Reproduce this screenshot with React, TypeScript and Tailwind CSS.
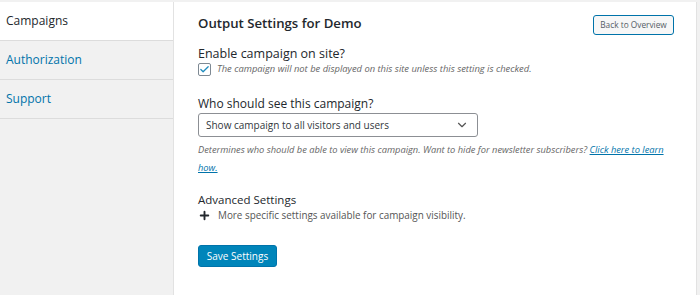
import { Check, ChevronDown, Plus } from "lucide-react";

const App = () => {
  return (
    <div className="w-[700px] h-[295px] bg-[#f1f1f1] pt-[2px] overflow-hidden font-['Open_Sans',sans-serif] text-[#23282d]">
      <div className="flex h-full">
        {/* Sidebar tabs */}
        <aside className="w-[174px] shrink-0 border-r border-[#e2e2e2] bg-[#f1f1f1]">
          <div className="h-[39px] bg-white border-b border-[#dcdcdc] flex items-center px-[6px] text-[12px] text-[#23282d]">
            Campaigns
          </div>
          <div className="h-[39px] border-b border-[#dcdcdc] flex items-center px-[6px] text-[12px] text-[#0073aa]">
            Authorization
          </div>
          <div className="h-[39px] border-b border-[#dcdcdc] flex items-center px-[6px] text-[12px] text-[#0073aa]">
            Support
          </div>
        </aside>

        {/* Main panel */}
        <main className="w-[523px] bg-white border-r border-[#e2e2e2] pl-[24px] pr-[22px]">
          <div className="flex items-start justify-between pt-[10px]">
            <h2 className="text-[13.2px] font-semibold leading-[20px] mt-[1px] text-[#23282d]">Output Settings for Demo</h2>
            <button className="mt-[3px] h-[20px] w-[81px] rounded-[3px] border border-[#0073aa] bg-[#f7f7f7] text-[8.3px] text-[#555d66] leading-none">
              Back to Overview
            </button>
          </div>

          <div className="mt-[10px]">
            <div className="text-[12.5px] leading-[18px]">Enable campaign on site?</div>
            <div className="flex items-center gap-[6px] h-[13px]">
              <span className="w-[13px] h-[13px] rounded-[2px] border border-[#7e8993] flex items-center justify-center">
                <Check size={13} strokeWidth={2.75} className="text-[#1e8cbe]" />
              </span>
              <span className="text-[9.4px] italic text-[#666]">
                The campaign will not be displayed on this site unless this setting is checked.
              </span>
            </div>
          </div>

          <div className="mt-[19px]">
            <div className="text-[12px] leading-[18px]">Who should see this campaign?</div>
            <div className="w-[280px] h-[24px] rounded-[3px] border border-[#8c8f94] flex items-center justify-between pl-[7px] pr-[8px] text-[10px] text-[#32373c]">
              <span>Show campaign to all visitors and users</span>
              <ChevronDown size={14} strokeWidth={2} className="text-[#555]" />
            </div>
            <p className="mt-[4px] text-[9.3px] italic text-[#666] leading-[18px] pr-[2px]">
              Determines who should be able to view this campaign. Want to hide for newsletter subscribers?{" "}
              <a className="text-[#0073aa] underline">Click here to learn how.</a>
            </p>
          </div>

          <div className="mt-[14px]">
            <div className="text-[11.5px] leading-[17px]">Advanced Settings</div>
            <div className="flex items-center gap-[7px] h-[14px]">
              <Plus size={13} strokeWidth={3.5} className="text-[#23282d]" />
              <span className="text-[9.9px] text-[#555]">More specific settings available for campaign visibility.</span>
            </div>
          </div>

          <button className="mt-[23px] h-[22px] w-[79px] rounded-[3px] bg-[#0085ba] border border-[#0073aa] text-white text-[10px] leading-none">
            Save Settings
          </button>
        </main>
      </div>
    </div>
  );
};

export default App;
